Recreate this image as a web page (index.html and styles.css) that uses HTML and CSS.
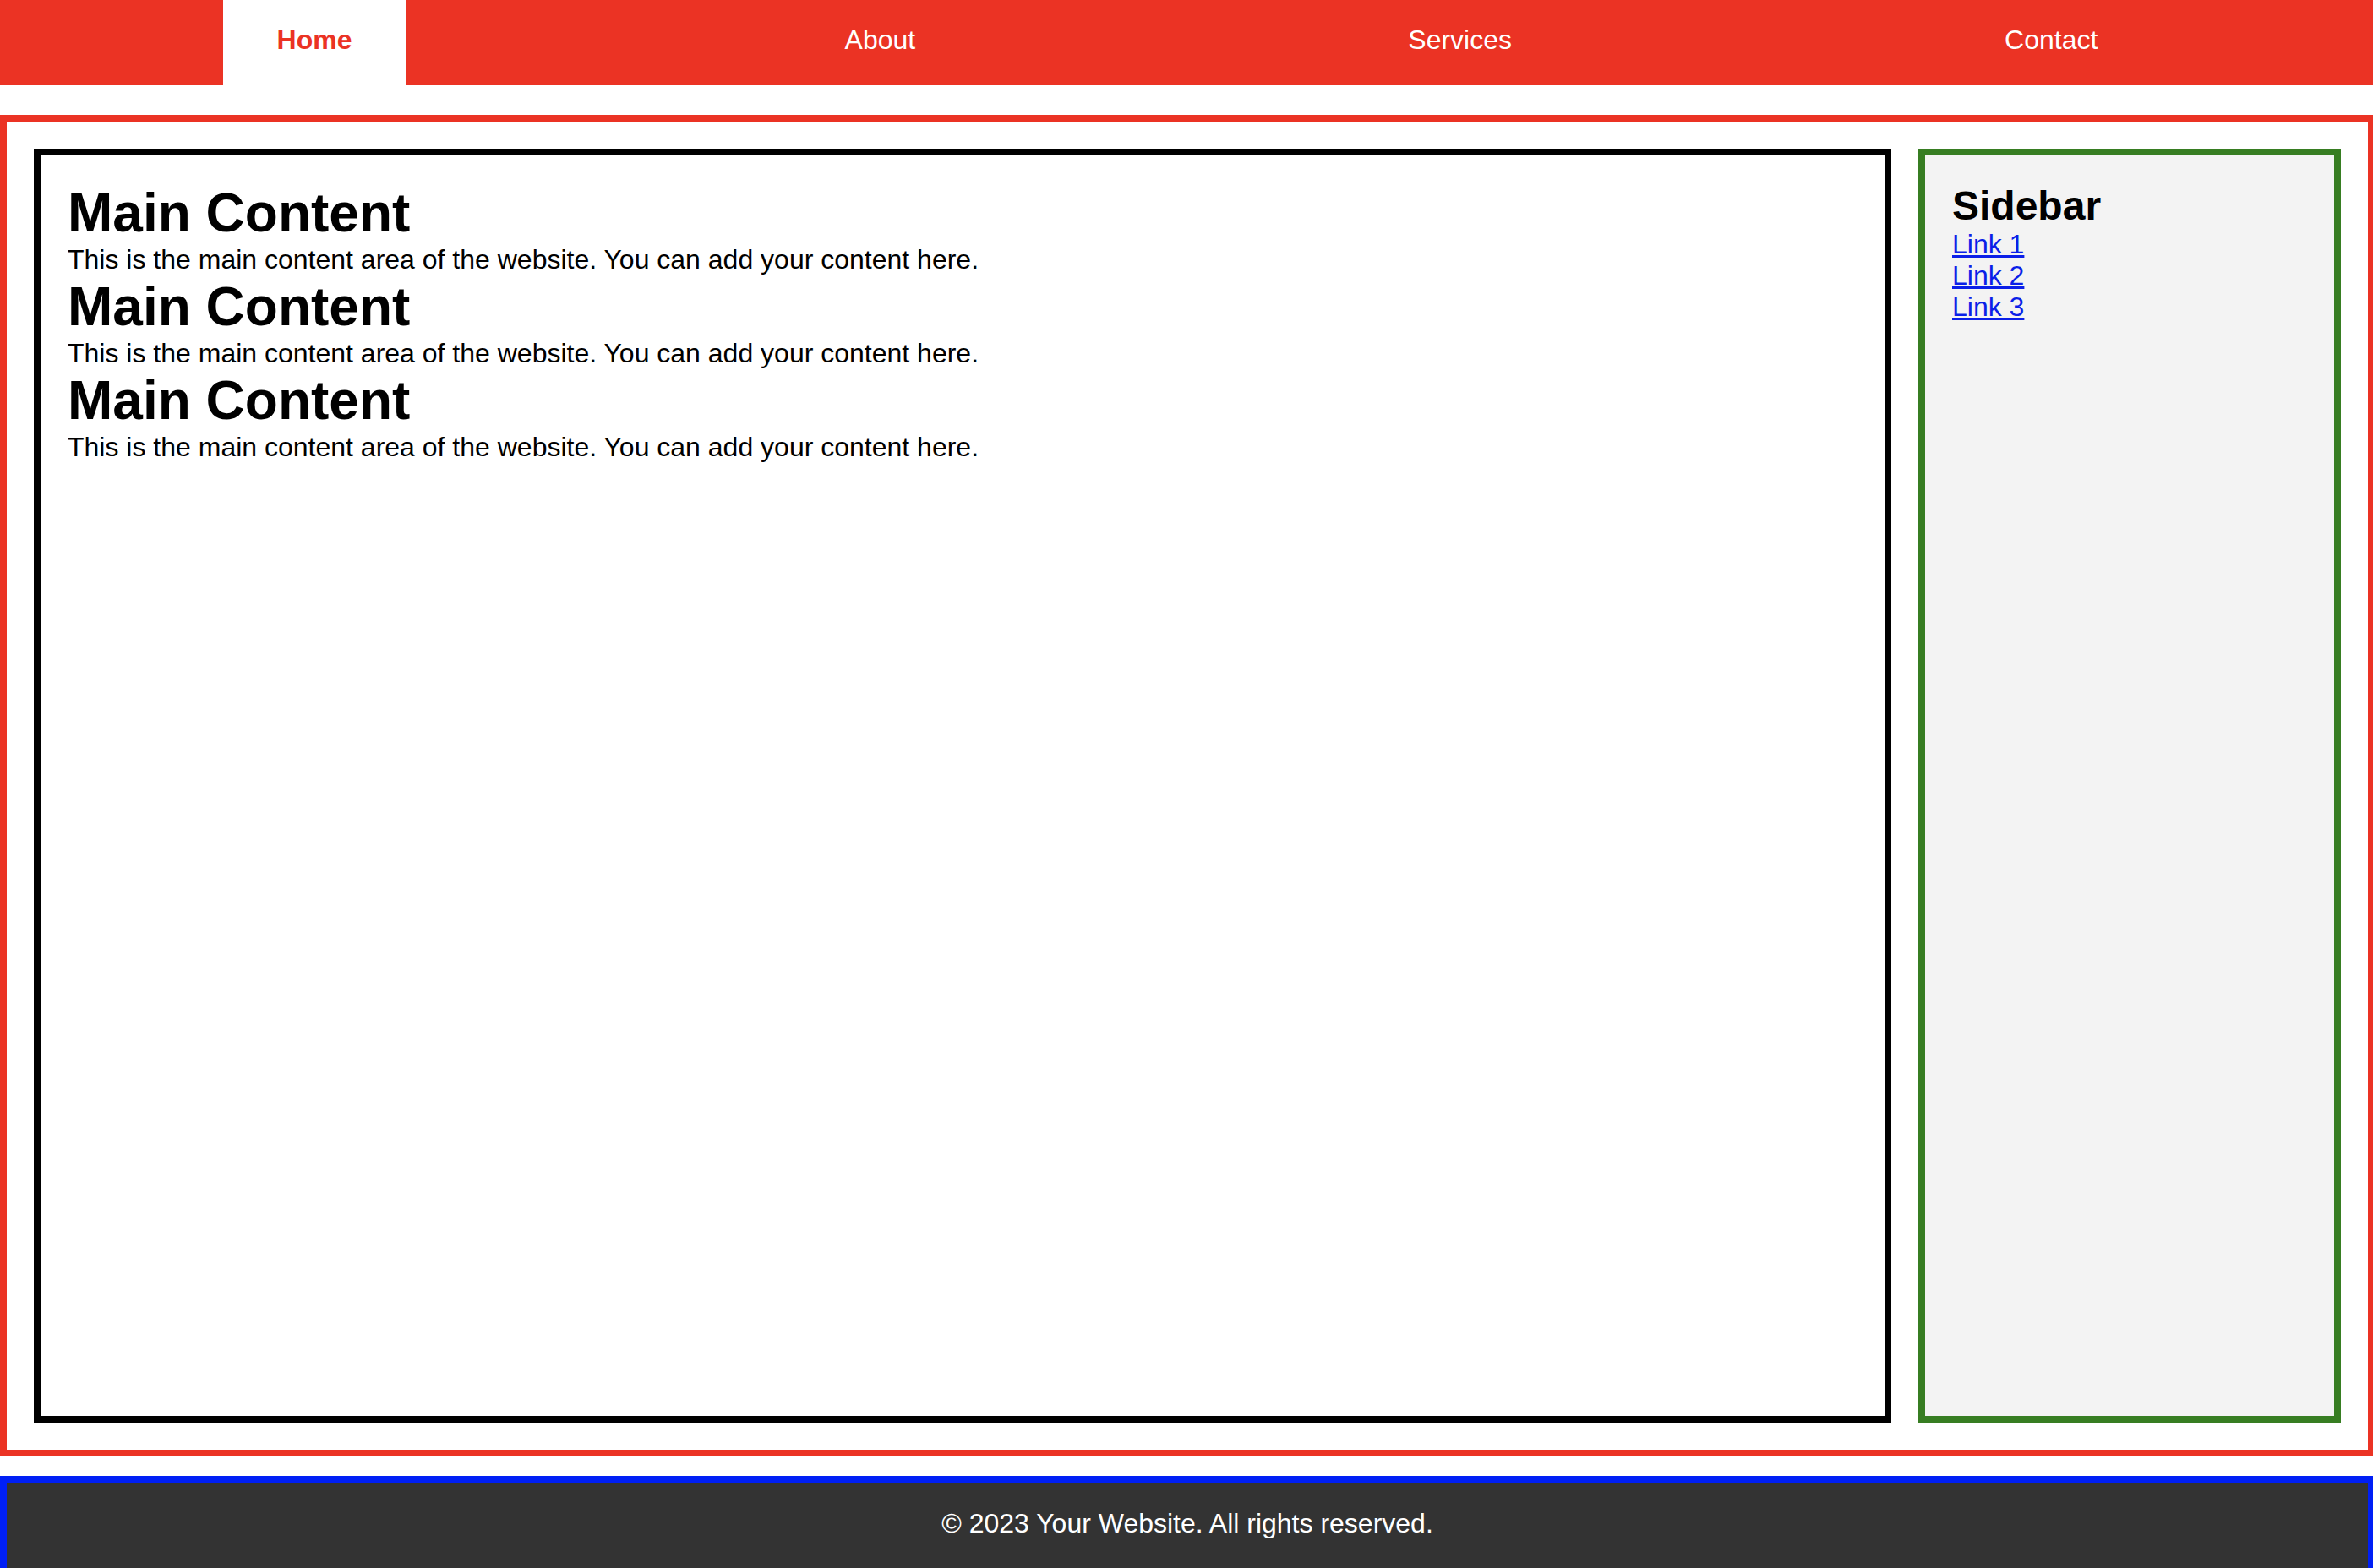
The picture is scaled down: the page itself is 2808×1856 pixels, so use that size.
FILE: index.html
```html
<!DOCTYPE html>
<html lang="en">
<head>
<meta charset="utf-8">
<title>Your Website</title>
<link rel="stylesheet" href="styles.css">
</head>
<body>
<nav class="nav">
  <a class="nav-item active" href="#">Home</a>
  <a class="nav-item" href="#">About</a>
  <a class="nav-item" href="#">Services</a>
  <a class="nav-item" href="#">Contact</a>
</nav>
<div class="container">
  <main class="main">
    <h1 class="title">Main Content</h1>
    <p class="text">This is the main content area of the website. You can add your content here.</p>
    <h1 class="title">Main Content</h1>
    <p class="text">This is the main content area of the website. You can add your content here.</p>
    <h1 class="title">Main Content</h1>
    <p class="text">This is the main content area of the website. You can add your content here.</p>
  </main>
  <aside class="sidebar">
    <h2 class="side-title">Sidebar</h2>
    <a class="side-link" href="#">Link 1</a>
    <a class="side-link" href="#">Link 2</a>
    <a class="side-link" href="#">Link 3</a>
  </aside>
</div>
<footer class="footer">
  <p class="footer-text">© 2023 Your Website. All rights reserved.</p>
</footer>
</body>
</html>
```
FILE: styles.css
```css
html {
  overflow: hidden;
}
body {
  margin: 0;
  font-family: "Liberation Sans", Arial, sans-serif;
  font-size: 32px;
  color: #000;
  background: #fff;
}
.nav {
  display: flex;
  justify-content: space-around;
  padding: 0 34px 0 36px;
  background: #eb3324;
}
.nav-item {
  display: block;
  padding: 29px 64px 35px;
  color: #fff;
  text-decoration: none;
  font-size: 32px;
}
.nav-item.active {
  background: #fff;
  color: #eb3324;
  font-weight: bold;
}
.container {
  display: flex;
  gap: 32px;
  box-sizing: border-box;
  height: 1588px;
  margin-top: 35.2px;
  margin-right: -2px;
  padding: 32px;
  border: 8px solid #eb3324;
}
.main {
  flex: 1;
  padding: 31px 32px 33px;
  border: 8px solid #000;
  background: #fff;
}
.title {
  margin: 0;
  font-size: 64px;
  font-weight: bold;
}
.text {
  margin: 0;
  font-size: 32px;
}
.sidebar {
  flex: 0 0 500px;
  box-sizing: border-box;
  padding: 32px;
  border: 8px solid #377d22;
  background: #f3f3f3;
}
.side-title {
  margin: 0;
  font-size: 48px;
  font-weight: bold;
}
.side-link {
  display: block;
  color: #0b1fe8;
  text-decoration: underline;
  font-size: 32px;
}
.footer {
  margin-top: 23px;
  margin-right: -2px;
  padding: 30px 32px 34px;
  border: 8px solid #001ff5;
  background: #333;
  color: #fff;
  text-align: center;
}
.footer-text {
  margin: 0;
  font-size: 32px;
}
```
